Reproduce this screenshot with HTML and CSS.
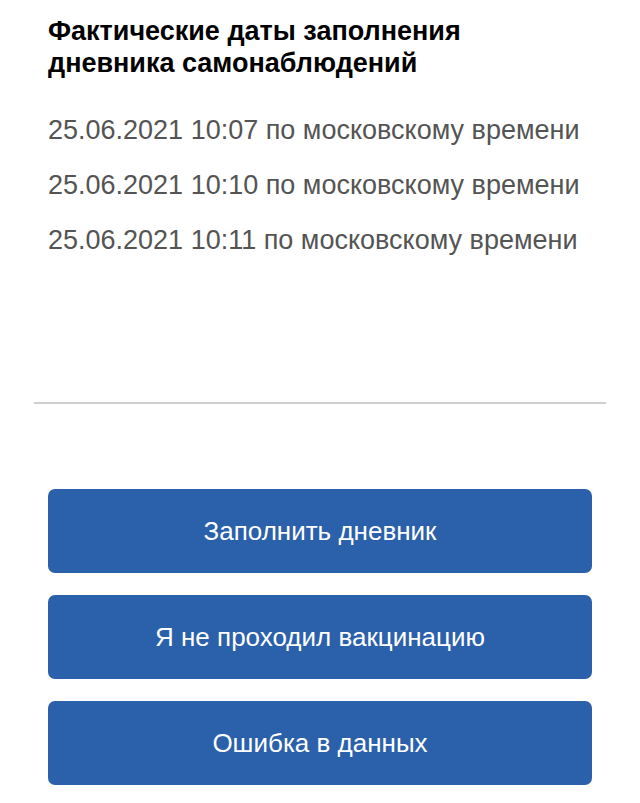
FILE: index.html
```
<!DOCTYPE html>
<html lang="ru">
<head>
    <meta charset="UTF-8" />
    <meta name="viewport" content="width=device-width, initial-scale=1.0"/>
    <title>Дневник самонаблюдений</title>
    <link rel="stylesheet" href="styles.css">
</head>
<body>
    <div class="diary">
        <h2 class="diary-title">Фактические даты заполнения дневника самонаблюдений</h2>
        <ul class="dates">
            <li>25.06.2021 10:07 по московскому времени</li>
            <li>25.06.2021 10:10 по московскому времени</li>
            <li>25.06.2021 10:11 по московскому времени</li>
        </ul>
    </div>

    <hr class="divider">

    <div class="actions">
        <button class="btn">Заполнить дневник</button>
        <button class="btn">Я не проходил вакцинацию</button>
        <button class="btn">Ошибка в данных</button>
    </div>
</body>
</html>
```

FILE: styles.css
```
body {
    margin: 0;
    background: #ffffff;
    font-family: "Liberation Sans", Arial, sans-serif;
    color: #000;
}

.diary {
    padding: 15px 48px 0 48px;
    height: 402px;
    box-sizing: border-box;
}

.diary-title {
    margin: 0;
    font-size: 27px;
    line-height: 32px;
    font-weight: bold;
    max-width: 470px;
}

.dates {
    list-style: none;
    margin: 24px 0 0 0;
    padding: 0;
}

.dates li {
    font-size: 27px;
    line-height: 55px;
    color: #545454;
}

.divider {
    margin: 0 34px;
    border: none;
    border-top: 2px solid #cfcfcf;
}

.actions {
    display: flex;
    flex-direction: column;
    gap: 22px;
    padding: 85px 48px 0 48px;
}

.btn {
    height: 84px;
    border: none;
    border-radius: 7px;
    background: #2b60aa;
    color: #fff;
    font-family: "Liberation Sans", Arial, sans-serif;
    font-size: 26px;
    cursor: pointer;
}
```
